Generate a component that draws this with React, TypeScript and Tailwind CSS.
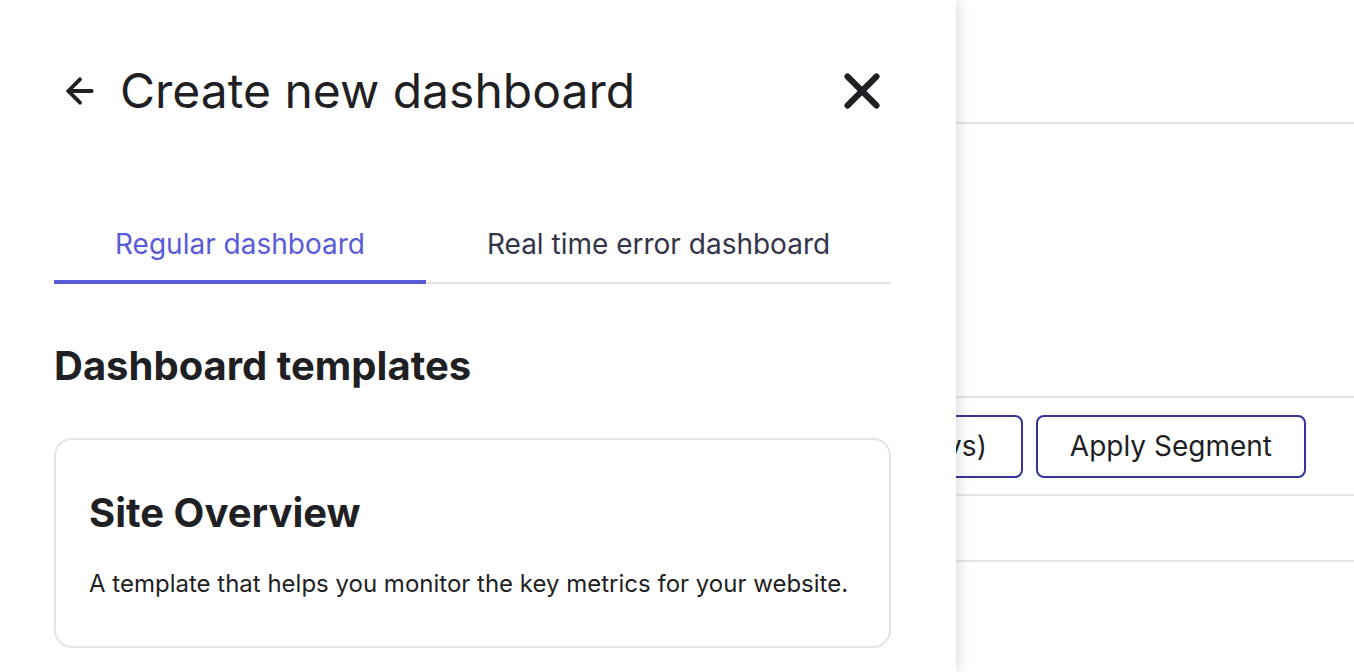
import { ArrowLeft, X } from 'lucide-react';

export default function App() {
  return (
    <div className="relative w-full h-[672px] overflow-hidden bg-white" style={{ fontFamily: 'Inter, "Noto Sans", sans-serif' }}>
      {/* page behind the drawer */}
      <div className="flex flex-col">
        <div className="h-[124px] border-b-2 border-[#e3e3e8]" />
        <div className="h-[274px] border-b-2 border-[#e3e3e8]" />
        <div className="h-[98px] border-b-2 border-[#e3e3e8] flex items-center justify-end gap-[13px] pr-[48px]">
          <button className="h-[63px] px-[34px] rounded-lg border-2 border-[#34359a] text-[28px] text-[#1f1f24] whitespace-nowrap">
            Date range (Last 7 days)
          </button>
          <button className="h-[63px] px-[32px] rounded-lg border-2 border-[#34359a] text-[28px] text-[#1f1f24] whitespace-nowrap">
            Apply Segment
          </button>
        </div>
        <div className="h-[66px] border-b-2 border-[#e3e3e8]" />
      </div>

      {/* drawer */}
      <div className="absolute left-0 top-0 h-full w-[956px] bg-white shadow-[4px_0_12px_rgba(0,0,0,0.12)] pl-[54px] pr-[65px]">
        <div className="flex items-center justify-between pt-[62px] h-[120px]">
          <div className="flex items-center gap-[20px] pl-[6px]">
            <ArrowLeft className="w-[40px] h-[40px] text-[#1f1f24]" strokeWidth={2.3} />
            <h1 className="text-[48px] leading-none text-[#1f1f24]">Create new dashboard</h1>
          </div>
          <X className="w-[58px] h-[58px] text-[#1f1f24]" strokeWidth={2.5} />
        </div>

        <div className="flex mt-[97px] border-b-2 border-[#e3e3e8] whitespace-nowrap">
          <div className="shrink-0 px-[61px] pb-[15px] pt-[6px] -mb-[2px] border-b-4 border-[#5a5bd8] text-[28px] text-[#5a5bd8]">
            Regular dashboard
          </div>
          <div className="shrink-0 px-[61px] pb-[15px] pt-[6px] text-[28px] text-[#34344a]">
            Real time error dashboard
          </div>
        </div>

        <h2 className="mt-[57px] text-[40px] font-bold text-[#1f1f24] leading-tight">Dashboard templates</h2>

        <div className="mt-[47px] rounded-[18px] border-2 border-[#e3e3e8] px-[33px] pt-[48px] pb-[44px]">
          <h3 className="text-[40px] font-bold text-[#1f1f24] leading-tight">Site Overview</h3>
          <p className="mt-[28px] text-[24px] leading-[36px] text-[#1f1f24]">
            A template that helps you monitor the key metrics for your website.
          </p>
        </div>
      </div>
    </div>
  );
}
